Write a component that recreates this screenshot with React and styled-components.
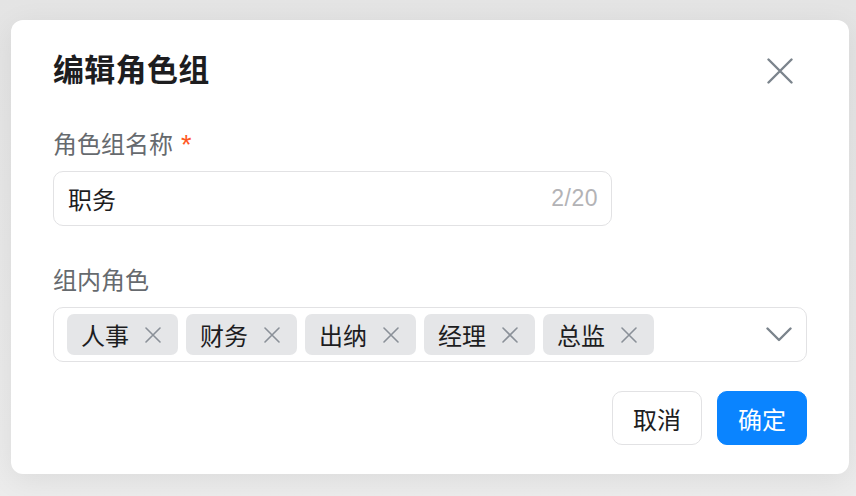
import React from 'react';
import styled, { createGlobalStyle } from 'styled-components';

const GlobalStyle = createGlobalStyle`
  html, body {
    margin: 0;
    padding: 0;
    background: #e9e9e9;
  }
  body {
    font-family: "Liberation Sans", "Noto Sans CJK SC", sans-serif;
    -webkit-font-smoothing: antialiased;
  }
`;

const colors = {
  text: '#1d1d1f',
  label: '#666a6e',
  border: '#e2e2e4',
  icon: '#7b848c',
  tag: '#e5e6e8',
  blue: '#0a84ff',
  required: '#ff5722',
};

const Page = styled.div`
  width: 856px;
  height: 496px;
  padding: 20px 7px 0 11px;
  box-sizing: border-box;
  background: linear-gradient(180deg, #e4e4e4 0%, #ececec 100%);
`;

const Modal = styled.div`
  width: 838px;
  height: 454px;
  box-sizing: border-box;
  padding: 30px 42px 29px 42px;
  background: #fff;
  border-radius: 12px;
  box-shadow: 0 6px 30px rgba(0, 0, 0, 0.07);
  display: flex;
  flex-direction: column;
`;

const Header = styled.div`
  display: flex;
  align-items: center;
  justify-content: space-between;
  height: 42px;
`;

const Title = styled.h2`
  margin: 0;
  font-size: 31px;
  font-weight: 600;
  line-height: 42px;
  letter-spacing: 0.3px;
  color: ${colors.text};
`;

const IconButton = styled.button`
  border: 0;
  background: none;
  padding: 0;
  margin-right: 14px;
  display: flex;
  color: ${colors.icon};
  cursor: pointer;
`;

const Field = styled.div`
  display: flex;
  flex-direction: column;
  gap: 8px;
  margin-top: ${props => props.top || '35px'};
`;

const Label = styled.label`
  font-size: 24px;
  line-height: 36px;
  color: ${colors.label};
  display: flex;
  align-items: center;
`;

const Required = styled.span`
  color: ${colors.required};
  margin-left: 8px;
  font-size: 27px;
  line-height: 36px;
`;

const InputBox = styled.div`
  width: ${props => props.width || '100%'};
  height: 55px;
  box-sizing: border-box;
  border: 1.5px solid ${colors.border};
  border-radius: 10px;
  display: flex;
  align-items: center;
  padding: 0 13px 0 14px;
`;

const TextInput = styled.input`
  flex: 1;
  border: 0;
  outline: none;
  background: none;
  font-family: inherit;
  font-size: 24px;
  color: ${colors.text};
  padding: 0;
`;

const Counter = styled.span`
  font-size: 23px;
  color: #b3b3b6;
  letter-spacing: 0.5px;
`;

const SelectBox = styled(InputBox)`
  padding: 0 14px 0 13px;
  gap: 8px;
`;

const Tag = styled.span`
  display: inline-flex;
  align-items: center;
  height: 41px;
  padding: 0 17px 0 14px;
  gap: 16px;
  background: ${colors.tag};
  border-radius: 7px;
  font-size: 24px;
  color: ${colors.text};
`;

const Spacer = styled.div`
  flex: 1;
`;

const Footer = styled.div`
  display: flex;
  justify-content: flex-end;
  gap: 15px;
  margin-top: 29px;
`;

const Button = styled.button`
  width: 90px;
  height: 54px;
  border-radius: 10px;
  font-family: inherit;
  font-size: 24px;
  cursor: pointer;
  border: 1.5px solid ${props => (props.primary ? colors.blue : colors.border)};
  background: ${props => (props.primary ? colors.blue : '#fff')};
  color: ${props => (props.primary ? '#fff' : colors.text)};
`;

const CloseIcon = ({ size = 26, stroke = 2.4 }) => (
  <svg width={size} height={size} viewBox="0 0 26 26" fill="none">
    <path d="M1.5 1.5 L24.5 24.5 M24.5 1.5 L1.5 24.5" stroke="currentColor" strokeWidth={stroke} strokeLinecap="round" />
  </svg>
);

const SmallX = () => (
  <svg width="16" height="16" viewBox="0 0 16 16" fill="none" style={{ color: '#8a9098' }}>
    <path d="M1 1 L15 15 M15 1 L1 15" stroke="currentColor" strokeWidth="1.6" strokeLinecap="round" />
  </svg>
);

const Chevron = () => (
  <svg width="26" height="15" viewBox="0 0 26 15" fill="none" style={{ color: colors.icon }}>
    <path d="M1.5 1.5 L13 13 L24.5 1.5" stroke="currentColor" strokeWidth="2.4" strokeLinecap="round" strokeLinejoin="round" />
  </svg>
);

const roles = ['人事', '财务', '出纳', '经理', '总监'];

const App = () => {
  return (
    <Page>
      <GlobalStyle />
      <Modal>
        <Header>
          <Title>编辑角色组</Title>
          <IconButton aria-label="关闭">
            <CloseIcon />
          </IconButton>
        </Header>

        <Field>
          <Label>
            角色组名称<Required>*</Required>
          </Label>
          <InputBox width="559px">
            <TextInput defaultValue="职务" />
            <Counter>2/20</Counter>
          </InputBox>
        </Field>

        <Field top="37px">
          <Label>组内角色</Label>
          <SelectBox>
            {roles.map(role => (
              <Tag key={role}>
                {role}
                <SmallX />
              </Tag>
            ))}
            <Spacer />
            <Chevron />
          </SelectBox>
        </Field>

        <Footer>
          <Button>取消</Button>
          <Button primary>确定</Button>
        </Footer>
      </Modal>
    </Page>
  );
};

export default App;
